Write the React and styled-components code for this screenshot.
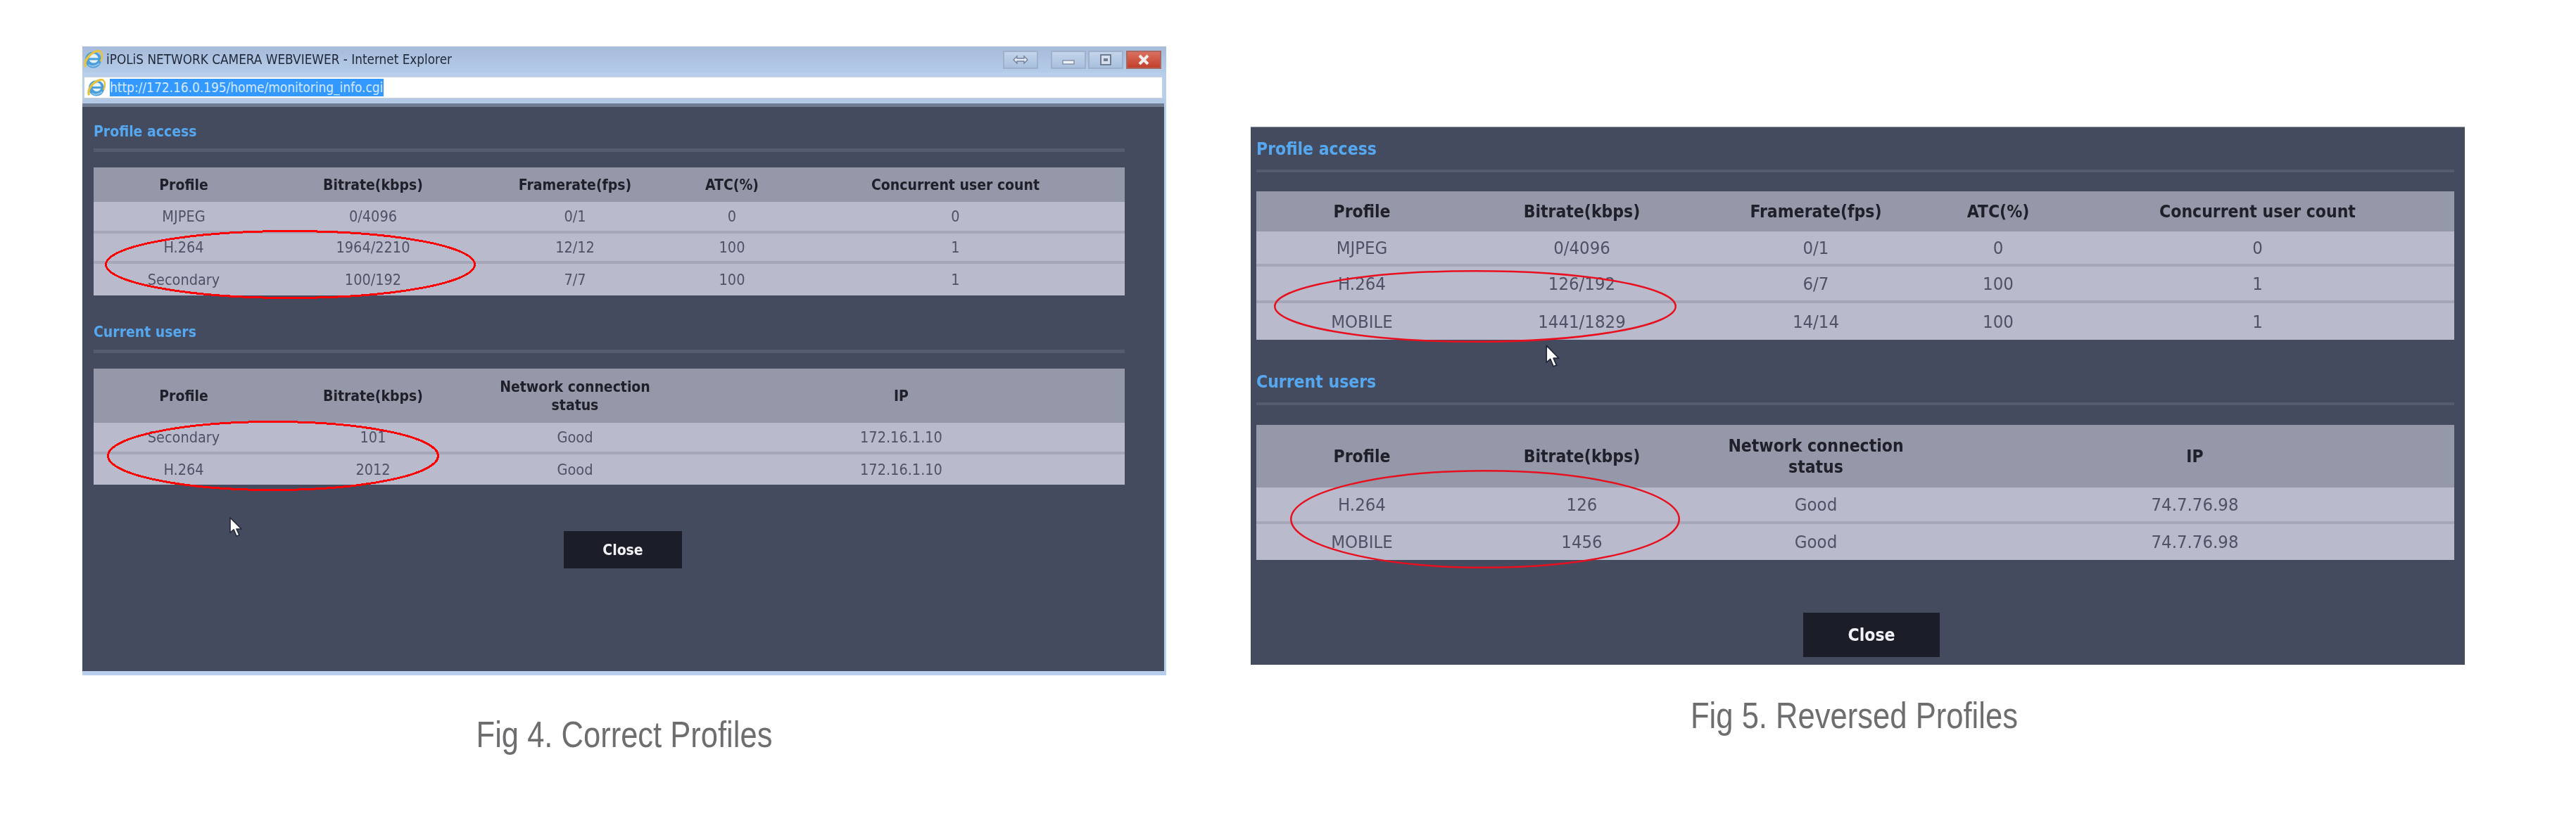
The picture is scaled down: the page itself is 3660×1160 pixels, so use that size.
import React from "react";
import styled, { createGlobalStyle } from "styled-components";

const GlobalStyle = createGlobalStyle`
  html, body {
    margin: 0;
    padding: 0;
    background: #fff;
  }
`;

const UI_FONT = `"DejaVu Sans Condensed", "DejaVu Sans", sans-serif`;

const Page = styled.div`
  width: 3660px;
  height: 1160px;
  display: flex;
  align-items: flex-start;
  padding-left: 117px;
  box-sizing: border-box;
  overflow: hidden;
  font-family: ${UI_FONT};
`;
const Figure = styled.figure`
  margin: ${p => p.$top}px 0 0 ${p => p.$left}px;
  width: ${p => p.$width}px;
  display: flex;
  flex-direction: column;
`;
const Window = styled.div`
  position: relative;
  display: flex;
  flex-direction: column;
  height: ${p => p.$height}px;
  box-sizing: border-box;
  background: #b7ceec;
`;
const TitleBar = styled.div`
  height: 37px;
  display: flex;
  align-items: center;
  padding: 0 7px 0 2px;
  background: linear-gradient(#a6bbd9, #b5cce9);
`;
const TitleText = styled.span`
  margin-left: 5px;
  font-size: 18.8px;
  color: #222a3a;
  white-space: nowrap;
  filter: blur(0.5px);
`;
const WinButtons = styled.div`
  margin-left: auto;
  display: flex;
  align-items: center;
`;
const WinButton = styled.div`
  width: ${p => p.$w || 50}px;
  height: 26px;
  margin-left: ${p => p.$gap || 0}px;
  box-sizing: border-box;
  display: flex;
  align-items: center;
  justify-content: center;
  border: 2px solid ${p => (p.$close ? "#a9685f" : "#9db0cc")};
  background: ${p =>
    p.$close ? "linear-gradient(#d9705e, #c2402c)" : "linear-gradient(#c3d4ea, #a9c0de)"};
`;
const AddressBar = styled.div`
  height: 31px;
  margin: 6px 5px 0 2px;
  display: flex;
  align-items: center;
  background: #fff;
  padding-left: 4px;
  border: 1px solid #c9d0dc;
  box-sizing: border-box;
`;
const Url = styled.span`
  margin-left: 6px;
  height: 25px;
  padding-right: 1px;
  line-height: 25px;
  font-size: 18.9px;
  background: #3399ff;
  color: #d4e8ff;
  white-space: nowrap;
`;
const ChromeEdge = styled.div`
  height: 12px;
  margin-right: 3px;
  background: linear-gradient(#b4c9e5 0 58%, #6f7c92 58% 100%);
`;
const Content = styled.div`
  flex: 1;
  display: flex;
  flex-direction: column;
  background: #444b5e;
  padding: ${p => p.$pad};
  margin: ${p => p.$margin || 0};
  border-top: ${p => p.$edge || "none"};
  filter: blur(${p => p.$blur}px);
`;
const SectionTitle = styled.h3`
  margin: ${p => p.$mt}px 0 0;
  height: ${p => p.$lh}px;
  line-height: ${p => p.$lh}px;
  font-size: ${p => p.$size}px;
  font-weight: bold;
  color: #55a8f0;
`;
const Rule = styled.div`
  margin: ${p => p.$mt}px 0 0;
  height: ${p => p.$h}px;
  background: #555c70;
`;
const Table = styled.div`
  margin-top: ${p => p.$mt}px;
  display: flex;
  flex-direction: column;
`;
const Row = styled.div`
  display: grid;
  grid-template-columns: ${p => p.$cols};
  height: ${p => p.$h}px;
  align-items: center;
  box-sizing: border-box;
  text-align: center;
  background: ${p => (p.$head ? "#9598a8" : "#b9bacc")};
  color: ${p => (p.$head ? "#20202a" : "#4f5265")};
  font-size: ${p => p.$size}px;
  font-weight: ${p => (p.$head ? "bold" : "normal")};
  line-height: 1.22;
  padding-top: ${p => p.$nudge || 0}px;
  border-bottom: ${p => (p.$line ? `${p.$line}px solid #a5a6b7` : "none")};
`;
const Cell = styled.div`
  white-space: pre-line;
`;
const CloseButton = styled.div`
  width: ${p => p.$w}px;
  height: ${p => p.$h}px;
  margin: ${p => p.$mt}px 0 0 ${p => p.$ml}px;
  display: flex;
  align-items: center;
  justify-content: center;
  background: #1b1e29;
  color: #f2f2f6;
  font-size: ${p => p.$size}px;
  font-weight: bold;
`;
const Caption = styled.figcaption`
  margin: ${p => p.$mt}px 0 0 ${p => p.$shift}px;
  text-align: center;
  font-family: "Liberation Sans", Arial, sans-serif;
  font-size: ${p => p.$size}px;
  line-height: 60px;
  color: #6d6e70;
  transform: scaleX(${p => p.$sx});
`;
const RingSvg = styled.svg`
  position: absolute;
  left: ${p => p.$x}px;
  top: ${p => p.$y}px;
  overflow: visible;
`;
const CursorSvg = styled.svg`
  position: absolute;
  left: ${p => p.$x}px;
  top: ${p => p.$y}px;
`;

function Ring({ x, y, w, h, stroke, color, crisp }) {
  return (
    <RingSvg $x={x} $y={y} width={w} height={h} shapeRendering={crisp ? "crispEdges" : "auto"}>
      <ellipse
        cx={w / 2}
        cy={h / 2}
        rx={w / 2 - stroke / 2}
        ry={h / 2 - stroke / 2}
        fill="none"
        stroke={color}
        strokeWidth={stroke}
      />
    </RingSvg>
  );
}

function Cursor({ x, y, w, h }) {
  return (
    <CursorSvg $x={x} $y={y} width={w} height={h} viewBox="0 0 20 30" preserveAspectRatio="none">
      <path
        d="M2 1 L2 23 L7 18.5 L11 28 L15 26.5 L11 17.5 L18 17.5 Z"
        fill="#fff"
        stroke="#23283a"
        strokeWidth="1.6"
        strokeLinejoin="round"
      />
    </CursorSvg>
  );
}

function IeIcon({ size }) {
  return (
    <svg width={size} height={size} viewBox="0 0 28 28">
      <circle cx="14" cy="14.5" r="12" fill="#4a9edc" />
      <circle cx="14.5" cy="12.5" r="6.8" fill="#e4f2fb" />
      <rect x="3" y="11.8" width="20" height="3.2" fill="#4a9edc" />
      <path d="M7 22 C12 25 18 24 23 20" fill="none" stroke="#8cc4ea" strokeWidth="2" />
      <path d="M3 25 C-1 17 9 3 23 1" fill="none" stroke="#e8c33c" strokeWidth="3.4" />
      <path d="M22 1 C28 3 28 10 25 17" fill="none" stroke="#e8c33c" strokeWidth="2.6" />
    </svg>
  );
}

function BrowserChrome() {
  return (
    <>
      <TitleBar>
        <IeIcon size={27} />
        <TitleText>iPOLiS NETWORK CAMERA WEBVIEWER - Internet Explorer</TitleText>
        <WinButtons>
          <WinButton>
            <svg width="24" height="14" viewBox="0 0 24 14">
              <path d="M2 7 L7 2 V5 H17 V2 L22 7 L17 12 V9 H7 V12 Z" fill="#e8eef7" stroke="#75839a" strokeWidth="1.4" />
            </svg>
          </WinButton>
          <WinButton $gap={18}>
            <svg width="20" height="14" viewBox="0 0 20 14">
              <rect x="2" y="8" width="16" height="5" fill="#eef2f8" stroke="#75839a" strokeWidth="1.2" />
            </svg>
          </WinButton>
          <WinButton $gap={3}>
            <svg width="18" height="18" viewBox="0 0 18 18">
              <rect x="2" y="2" width="14" height="14" fill="#d5dfee" stroke="#6f7c92" strokeWidth="2" />
              <rect x="6" y="7" width="6" height="4" fill="#6f7c92" />
            </svg>
          </WinButton>
          <WinButton $gap={4} $close>
            <svg width="18" height="18" viewBox="0 0 18 18">
              <path d="M3 3 L15 15 M15 3 L3 15" stroke="#f3eeee" strokeWidth="4" />
            </svg>
          </WinButton>
        </WinButtons>
      </TitleBar>
      <AddressBar>
        <IeIcon size={26} />
        <Url>http://172.16.0.195/home/monitoring_info.cgi</Url>
      </AddressBar>
      <ChromeEdge />
    </>
  );
}

function DataTable({ mt, cols, size, rowSize, headH, nudge, line, headers, rows }) {
  return (
    <Table $mt={mt}>
      <Row $head $cols={cols} $h={headH} $size={size} $nudge={nudge}>
        {headers.map(h => (
          <Cell key={h}>{h}</Cell>
        ))}
      </Row>
      {rows.map((r, i) => (
        <Row
          key={i}
          $cols={cols}
          $h={r.h}
          $size={rowSize}
          $nudge={nudge}
          $line={i < rows.length - 1 ? line : 0}
        >
          {r.cells.map((c, j) => (
            <Cell key={j}>{c}</Cell>
          ))}
        </Row>
      ))}
    </Table>
  );
}

const ACCESS_HEAD = ["Profile", "Bitrate(kbps)", "Framerate(fps)", "ATC(%)", "Concurrent user count"];
const USERS_HEAD = ["Profile", "Bitrate(kbps)", "Network connection\nstatus", "IP"];

export default function App() {
  const colsA = "256px 282px 292px 154px 481px";
  const usersA = "256px 282px 292px 635px";
  const colsB = "300px 325px 340px 178px 559px";
  const usersB = "300px 325px 340px 737px";
  return (
    <Page>
      <GlobalStyle />
      <Figure $top={66} $left={0} $width={1540}>
        <Window $height={894}>
          <BrowserChrome />
          <Content $pad="0 56px 0 16px" $margin="0 3px 6px 0" $blur={0.6}>
            <SectionTitle $mt={20} $lh={30} $size={21}>Profile access</SectionTitle>
            <Rule $mt={9} $h={5} />
            <DataTable
              mt={22}
              cols={colsA}
              size={21}
              rowSize={21.5}
              headH={49}
              nudge={2}
              line={4}
              headers={ACCESS_HEAD}
              rows={[
                { h: 45, cells: ["MJPEG", "0/4096", "0/1", "0", "0"] },
                { h: 43, cells: ["H.264", "1964/2210", "12/12", "100", "1"] },
                { h: 45, cells: ["Secondary", "100/192", "7/7", "100", "1"] },
              ]}
            />
            <SectionTitle $mt={37} $lh={30} $size={21}>Current users</SectionTitle>
            <Rule $mt={10} $h={5} />
            <DataTable
              mt={22}
              cols={usersA}
              size={21}
              rowSize={21.5}
              headH={77}
              nudge={2}
              line={4}
              headers={USERS_HEAD}
              rows={[
                { h: 45, cells: ["Secondary", "101", "Good", "172.16.1.10"] },
                { h: 43, cells: ["H.264", "2012", "Good", "172.16.1.10"] },
              ]}
            />
            <CloseButton $w={168} $h={53} $mt={66} $ml={668} $size={21}>Close</CloseButton>
          </Content>
          <Ring x={32} y={261} w={527} h={98} stroke={3} color="#ff0000" crisp />
          <Ring x={35} y={532} w={472} h={100} stroke={3} color="#ff0000" crisp />
          <Cursor x={208} y={669} w={20} h={29} />
        </Window>
        <Caption $mt={54} $shift={0} $size={52} $sx={0.837}>Fig 4. Correct Profiles</Caption>
      </Figure>

      <Figure $top={180} $left={120} $width={1725}>
        <Window $height={765}>
          <Content $pad="14px 15px 0 8px" $edge="1px solid #9a9ca8" $blur={0.5}>
            <SectionTitle $mt={0} $lh={34} $size={24.5}>Profile access</SectionTitle>
            <Rule $mt={12} $h={4} />
            <DataTable
              mt={27}
              cols={colsB}
              size={24.5}
              rowSize={25.5}
              headH={57}
              nudge={1}
              line={4}
              headers={ACCESS_HEAD}
              rows={[
                { h: 50, cells: ["MJPEG", "0/4096", "0/1", "0", "0"] },
                { h: 52, cells: ["H.264", "126/192", "6/7", "100", "1"] },
                { h: 52, cells: ["MOBILE", "1441/1829", "14/14", "100", "1"] },
              ]}
            />
            <SectionTitle $mt={43} $lh={34} $size={24.5}>Current users</SectionTitle>
            <Rule $mt={12} $h={4} />
            <DataTable
              mt={28}
              cols={usersB}
              size={24.5}
              rowSize={25.5}
              headH={89}
              nudge={1}
              line={4}
              headers={USERS_HEAD}
              rows={[
                { h: 52, cells: ["H.264", "126", "Good", "74.7.76.98"] },
                { h: 51, cells: ["MOBILE", "1456", "Good", "74.7.76.98"] },
              ]}
            />
            <CloseButton $w={194} $h={63} $mt={75} $ml={777} $size={24.5}>Close</CloseButton>
          </Content>
          <Ring x={33} y={204} w={572} h={103} stroke={2.5} color="#e80f1e" />
          <Ring x={56} y={488} w={554} h={140} stroke={2.5} color="#e80f1e" />
          <Cursor x={418} y={310} w={22} h={33} />
        </Window>
        <Caption $mt={42} $shift={-10} $size={52} $sx={0.838}>Fig 5. Reversed Profiles</Caption>
      </Figure>
    </Page>
  );
}
